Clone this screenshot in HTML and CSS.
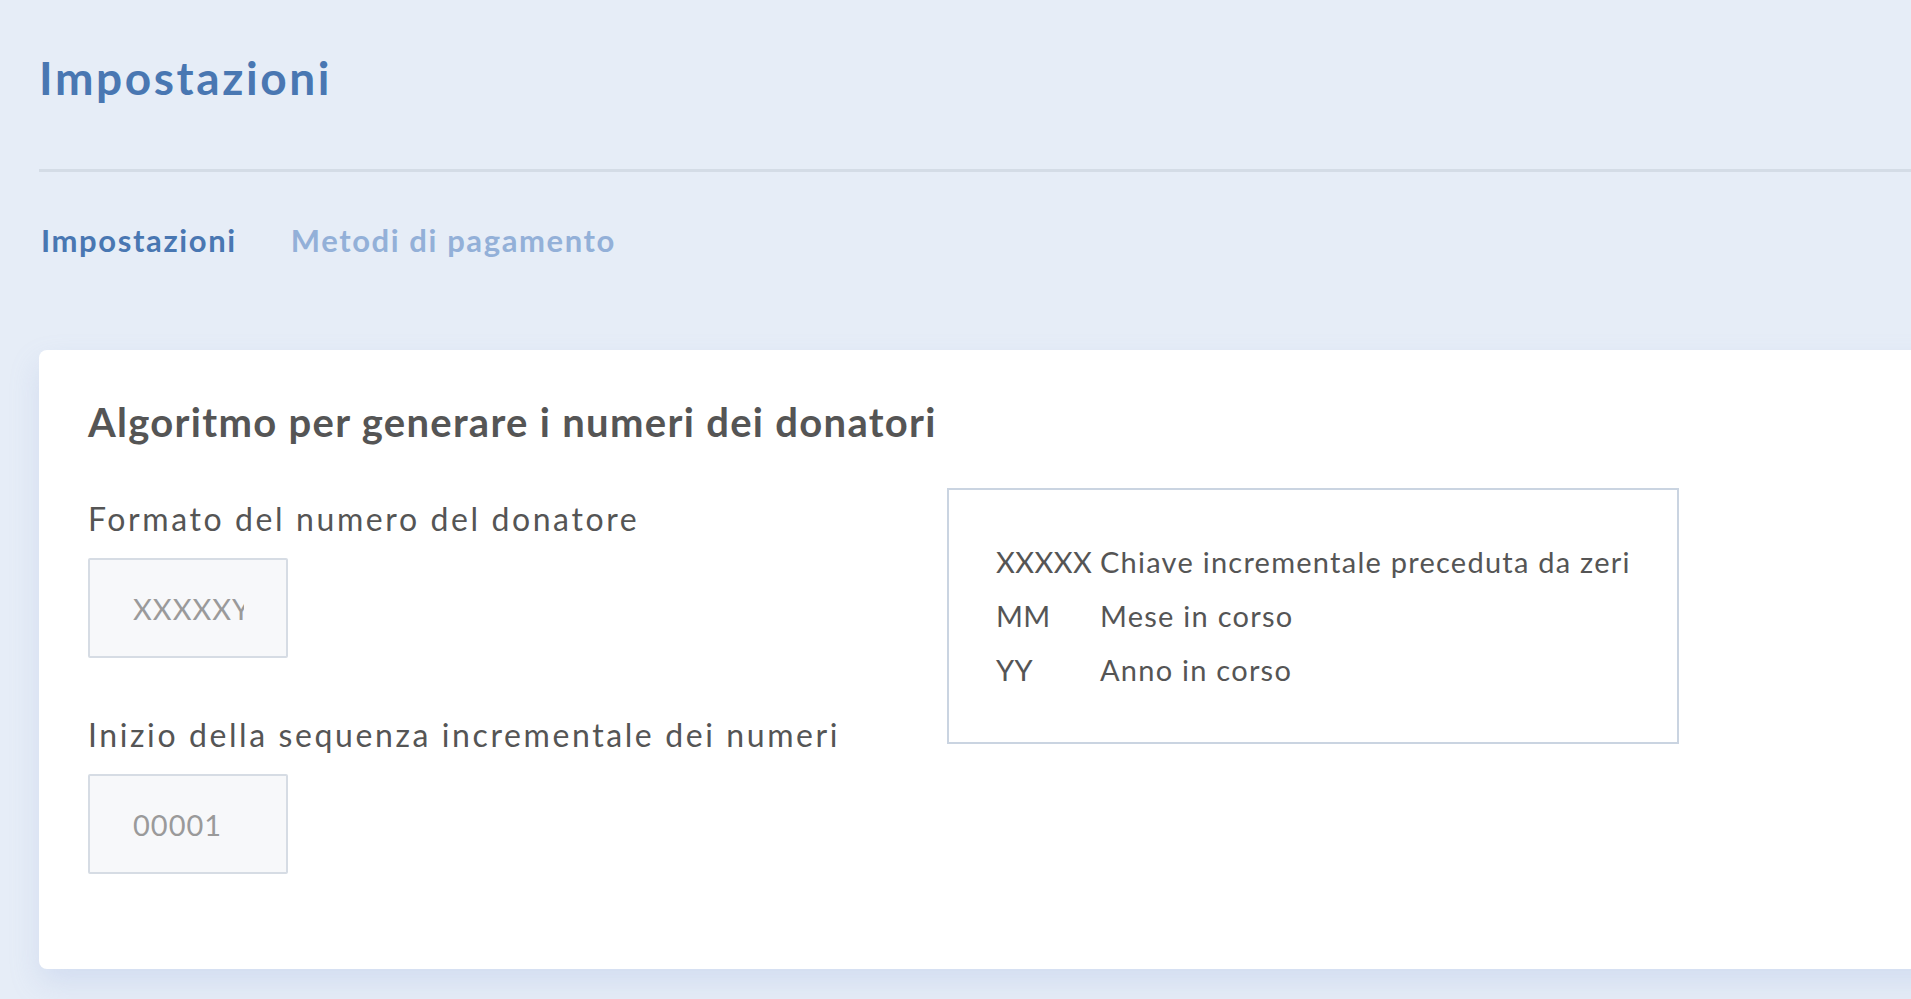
FILE: index.html
```html
<!DOCTYPE html>
<html lang="it">
<head>
    <meta charset="UTF-8">
    <meta name="viewport" content="width=device-width, initial-scale=1.0">
    <title>Impostazioni</title>
    <link rel="stylesheet" href="styles.css">
</head>
<body>
    <div class="page">
        <h1 class="page-title">Impostazioni</h1>
        <div class="divider"></div>
        <nav class="tabs">
            <a class="tab active" href="#">Impostazioni</a>
            <a class="tab" href="#">Metodi di pagamento</a>
        </nav>
        <section class="card">
            <h2 class="card-title">Algoritmo per generare i numeri dei donatori</h2>
            <div class="card-row">
                <div class="fields">
                    <label class="field-label" for="format">Formato del numero del donatore</label>
                    <input class="field-input" type="text" id="format" value="XXXXXYY">
                    <label class="field-label second" for="start">Inizio della sequenza incrementale dei numeri</label>
                    <input class="field-input" type="text" id="start" value="00001">
                </div>
                <div class="legend">
                    <span class="key">XXXXX</span><span>Chiave incrementale preceduta da zeri</span>
                    <span class="key">MM</span><span>Mese in corso</span>
                    <span class="key">YY</span><span>Anno in corso</span>
                </div>
            </div>
        </section>
    </div>
</body>
</html>
```

FILE: styles.css
```css
body {
    margin: 0;
    background: #e6edf7;
    font-family: Lato, "Open Sans", sans-serif;
    overflow: hidden;
    height: 100vh;
}
.page {
    padding-left: 39px;
}
.page-title {
    margin: 0;
    padding-top: 50px;
    font-size: 46px;
    line-height: 56px;
    font-weight: 700;
    letter-spacing: 2.6px;
    color: #4977b2;
}
.divider {
    margin-top: 63px;
    height: 3px;
    background: #d4dce6;
}
.tabs {
    display: flex;
    gap: 54px;
    margin-top: 48px;
    padding-left: 2px;
}
.tab {
    font-size: 31px;
    line-height: 40px;
    font-weight: 700;
    letter-spacing: 1.6px;
    color: #93b0d8;
    text-decoration: none;
}
.tab.active {
    color: #4977b2;
}
.card {
    margin-top: 90px;
    margin-right: -40px;
    background: #fff;
    border-radius: 8px;
    padding: 48px 0 95px 49px;
    box-shadow: 0 14px 30px rgba(140, 165, 220, 0.22);
}
.card-title {
    margin: 0 0 42px;
    font-size: 40px;
    line-height: 48px;
    font-weight: 700;
    letter-spacing: 1.3px;
    color: #555;
}
.card-row {
    display: flex;
    align-items: flex-start;
}
.fields {
    flex: 0 0 859px;
    display: flex;
    flex-direction: column;
    align-items: flex-start;
}
.field-label {
    margin-top: 11px;
    font-size: 32px;
    line-height: 40px;
    letter-spacing: 2.6px;
    color: #555;
}
.field-label.second {
    margin-top: 57px;
}
.field-input {
    box-sizing: border-box;
    width: 200px;
    height: 100px;
    margin-top: 19px;
    padding: 0 42px 0 43px;
    border: 2px solid #d6dce4;
    border-radius: 2px;
    background: #f7f8fa;
    font-family: Lato, "Open Sans", sans-serif;
    font-size: 29px;
    letter-spacing: 1px;
    color: #9a9a9a;
    outline: none;
}
.legend {
    box-sizing: border-box;
    width: 732px;
    height: 256px;
    border: 2px solid #cad4e1;
    padding: 45px 0 0 47px;
    display: grid;
    grid-template-columns: 104px auto;
    align-content: start;
    font-size: 29px;
    line-height: 54px;
    letter-spacing: 1.25px;
    color: #555;
}
.legend .key {
    letter-spacing: 0.4px;
}
```
